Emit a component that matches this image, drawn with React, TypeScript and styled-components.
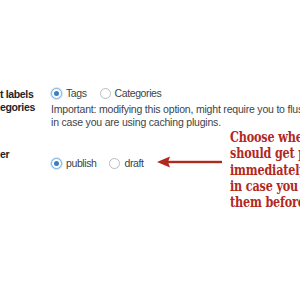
import styled, { createGlobalStyle } from "styled-components";

const Global = createGlobalStyle`
  html, body {
    margin: 0;
    padding: 0;
    background: #fff;
  }
`;

const Page = styled.div`
  width: 300px;
  height: 300px;
  overflow: hidden;
  position: relative;
  background: #fff;
  font-family: "Liberation Sans", Arial, sans-serif;
  color: #3c434a;
  padding-top: 85px;
  box-sizing: border-box;
`;

const Row = styled.div<{ $gap?: number }>`
  display: grid;
  grid-template-columns: 51px 1fr;
  margin-bottom: ${({ $gap }) => $gap ?? 0}px;
`;

const Label = styled.div<{ $shift?: number }>`
  font-size: 10.5px;
  font-weight: bold;
  letter-spacing: -0.35px;
  line-height: 13px;
  color: #1d2327;
  white-space: pre;
  margin-top: ${({ $shift }) => $shift ?? 3}px;
`;

const Field = styled.div`
  font-size: 10.5px;
  letter-spacing: -0.2px;
  line-height: 13px;
  white-space: nowrap;
`;

const Choices = styled.div`
  display: flex;
  align-items: center;
  gap: 13px;
  height: 16px;
  margin-bottom: 2px;
`;

const Choice = styled.label`
  display: flex;
  align-items: center;
  gap: 4px;
  font-size: 10.5px;
  letter-spacing: -0.4px;
`;

const Radio = styled.span<{ $on?: boolean }>`
  width: 9px;
  height: 9px;
  border-radius: 50%;
  border: 1px solid ${({ $on }) => ($on ? "#7fb0dc" : "#b8bcc2")};
  box-shadow: ${({ $on }) => ($on ? "0 0 0 1px #d3e6f6" : "none")};
  display: flex;
  align-items: center;
  justify-content: center;
  background: #fff;
  &::after {
    content: "";
    width: 5px;
    height: 5px;
    border-radius: 50%;
    background: ${({ $on }) => ($on ? "#3b7fc0" : "transparent")};
  }
`;

const Note = styled.div`
  position: absolute;
  left: 157px;
  top: 129px;
  display: flex;
  align-items: flex-start;
  gap: 8px;
`;

const Arrow = styled.svg`
  margin-top: 27px;
  flex-shrink: 0;
`;

const Callout = styled.div`
  font-family: "DejaVu Serif", "Liberation Serif", serif;
  font-weight: bold;
  font-size: 14px;
  letter-spacing: -0.2px;
  line-height: 16.3px;
  color: #b1281f;
  white-space: pre;
  transform: scaleX(0.8);
  transform-origin: left top;
`;

export default function App() {
  return (
    <>
      <Global />
      <Page>
        <Row $gap={26}>
          <Label>{"t labels\negories"}</Label>
          <Field>
            <Choices>
              <Choice>
                <Radio $on />
                Tags
              </Choice>
              <Choice>
                <Radio />
                Categories
              </Choice>
            </Choices>
            <div>Important: modifying this option, might require you to flush and rebuild</div>
            <div>in case you are using caching plugins.</div>
          </Field>
        </Row>
        <Row>
          <Label $shift={-7}>er</Label>
          <Field>
            <Choices>
              <Choice>
                <Radio $on />
                publish
              </Choice>
              <Choice>
                <Radio />
                draft
              </Choice>
            </Choices>
          </Field>
        </Row>
        <Note>
          <Arrow width="65" height="12" viewBox="0 0 65 12">
            <polygon points="0,6 13,0.5 11,6 13,11.5" fill="#b1281f" />
            <rect x="10" y="4.8" width="55" height="2.4" fill="#b1281f" />
          </Arrow>
          <Callout>
            {"Choose when the posts\nshould get published\nimmediately or\nin case you want to\nthem before"}
          </Callout>
        </Note>
      </Page>
    </>
  );
}
